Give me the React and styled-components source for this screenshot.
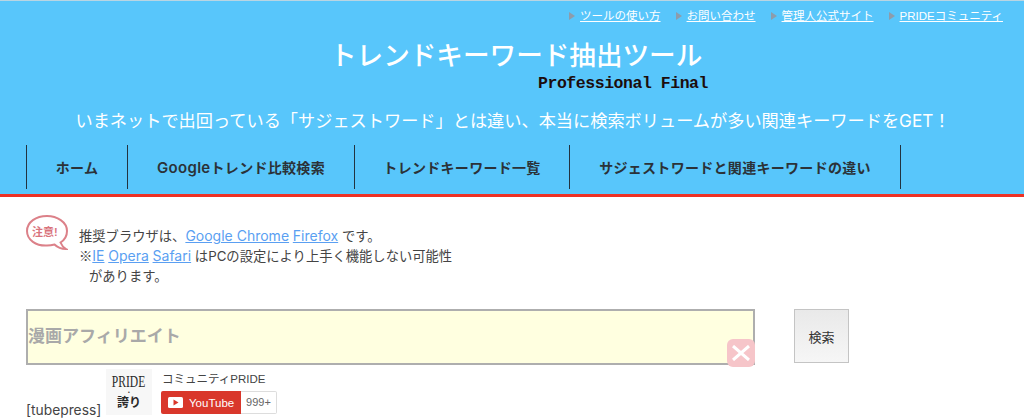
import React from 'react';
import styled, { createGlobalStyle } from 'styled-components';

const JP = `"Liberation Sans", "Noto Sans CJK JP", sans-serif`;
const WIDE = `Inter, "Noto Sans CJK JP", sans-serif`;

const Global = createGlobalStyle`
  html, body { margin: 0; padding: 0; background: #fff; overflow: hidden; }
  body { font-family: ${JP}; color: #333; }
`;

const Page = styled.div`
  width: 1024px;
  height: 419px;
  overflow: hidden;
`;

const Header = styled.header`
  height: 193px;
  background: #58c6fb;
  border-top: 1px solid #b9d5e3;
  border-bottom: 3px solid #ee3124;
  display: flex;
  flex-direction: column;
`;

const TopLinks = styled.nav`
  display: flex;
  justify-content: flex-end;
  gap: 15px;
  padding: 6px 21px 0 0;
  height: 18px;
  font-size: 11.5px;
  line-height: 18px;
`;

const TopLink = styled.a`
  color: #fff;
  text-decoration: underline;
  display: flex;
  align-items: center;
  gap: 5px;
  &::before {
    content: '';
    width: 0;
    height: 0;
    border-left: 6px solid #8d9cab;
    border-top: 4px solid transparent;
    border-bottom: 4px solid transparent;
  }
`;

const Logo = styled.div`
  display: flex;
  flex-direction: column;
  align-items: flex-end;
  width: 378px;
  margin: 15px 0 0 330px;
`;

const Title = styled.h1`
  margin: 0;
  width: 100%;
  font-size: 26.6px;
  line-height: 32px;
  font-weight: 500;
  color: #fff;
  white-space: nowrap;
`;

const Sub = styled.div`
  font-family: "Liberation Mono", monospace;
  font-weight: 700;
  font-size: 16.5px;
  letter-spacing: -0.46px;
  line-height: 18px;
  margin-top: 3px;
  color: #1c0c0c;
  white-space: nowrap;
`;

const Tagline = styled.p`
  margin: 15px 0 0;
  padding-left: 2px;
  text-align: center;
  font-family: ${WIDE};
  font-size: 17.2px;
  line-height: 26px;
  color: #fff;
  white-space: nowrap;
`;

const Nav = styled.nav`
  display: flex;
  margin: 11px 0 0 26px;
  height: 44px;
  width: max-content;
  border-right: 1px solid #22333f;
`;

const NavItem = styled.a`
  display: flex;
  align-items: center;
  justify-content: center;
  width: ${p => p.$w}px;
  box-sizing: border-box;
  border-left: 1px solid #22333f;
  font-family: ${WIDE};
  font-size: 14px;
  letter-spacing: 0.3px;
  font-weight: 600;
  color: #2b3238;
  white-space: pre;
`;

const NavLatin = styled.span`
  font-size: 15px;
`;

const Main = styled.main`
  padding: 18px 0 0 26px;
`;

const Notice = styled.div`
  display: flex;
  align-items: flex-start;
  gap: 11px;
`;

const Bubble = styled.svg`
  width: 42px;
  height: 37px;
  flex: none;
`;

const NoticeText = styled.div`
  margin-top: 11px;
  width: 390px;
  font-family: ${WIDE};
  font-size: 13.3px;
  line-height: 20px;
  color: #444;
  white-space: nowrap;
`;

const Mark = styled.span`
  font-family: "Noto Sans CJK JP", sans-serif;
`;

const Indent = styled.div`
  padding-left: 10px;
`;

const Link = styled.a`
  font-size: 14px;
  color: #5a9ff2;
  text-decoration: underline;
`;

const SearchRow = styled.form`
  display: flex;
  align-items: flex-start;
  margin-top: 23px;
  gap: 39px;
`;

const InputWrap = styled.div`
  position: relative;
  width: 729px;
  height: 56px;
`;

const Input = styled.div`
  box-sizing: border-box;
  width: 100%;
  height: 100%;
  background: #ffffe0;
  border: 2px solid #aeaeae;
  font-size: 17px;
  font-weight: 700;
  color: #a9a9a9;
  line-height: 52px;
`;

const Clear = styled.div`
  position: absolute;
  right: 0;
  bottom: -2px;
  width: 28px;
  height: 28px;
  border-radius: 6px;
  background: #f6c5c9;
  display: flex;
  align-items: center;
  justify-content: center;
`;

const SearchButton = styled.button`
  box-sizing: border-box;
  width: 55px;
  height: 54px;
  border: 1px solid #c4c4c4;
  background: linear-gradient(#e9e9e9, #f6f6f6);
  font-family: ${JP};
  font-size: 13px;
  color: #333;
  padding: 0;
`;

const Bottom = styled.div`
  display: flex;
  align-items: flex-start;
  margin-top: 4px;
`;

const Tube = styled.span`
  font-family: ${WIDE};
  font-size: 13.8px;
  line-height: 18px;
  margin-top: 32px;
  color: #444;
  width: 80px;
  white-space: nowrap;
`;

const Avatar = styled.div`
  width: 46px;
  height: 46px;
  background: #f7f7f7;
  display: flex;
  flex-direction: column;
  align-items: center;
  color: #2a2a2a;
`;

const AvatarTop = styled.span`
  font-family: "Liberation Serif", serif;
  font-size: 17px;
  line-height: 16px;
  margin-top: 5px;
  transform: scaleX(.68);
`;

const AvatarDot = styled.span`
  font-size: 5px;
  line-height: 4px;
`;

const AvatarBottom = styled.span`
  font-family: "Noto Sans CJK JP", serif;
  font-weight: 700;
  font-size: 12px;
  line-height: 16px;
`;

const Channel = styled.div`
  margin-left: 9px;
`;

const ChannelName = styled.div`
  font-size: 11.5px;
  line-height: 16px;
  margin-top: 2px;
  padding-left: 1px;
  color: #444;
`;

const Yt = styled.div`
  display: flex;
  margin-top: 4px;
  height: 23px;
`;

const YtButton = styled.div`
  display: flex;
  align-items: center;
  gap: 6px;
  width: 80px;
  box-sizing: border-box;
  padding-left: 7px;
  background: #d9372b;
  border-radius: 2px 0 0 2px;
  color: #fff;
  font-size: 11.5px;
  font-weight: 500;
`;

const YtCount = styled.div`
  box-sizing: border-box;
  width: 36px;
  border: 1px solid #ddd;
  border-left: 0;
  border-radius: 0 2px 2px 0;
  font-size: 11px;
  line-height: 21px;
  text-align: center;
  color: #666;
`;

export default function App() {
  return (
    <Page>
      <Global />
      <Header>
        <TopLinks>
          <TopLink>ツールの使い方</TopLink>
          <TopLink>お問い合わせ</TopLink>
          <TopLink>管理人公式サイト</TopLink>
          <TopLink>PRIDEコミュニティ</TopLink>
        </TopLinks>
        <Logo>
          <Title>トレンドキーワード抽出ツール</Title>
          <Sub>Professional Final</Sub>
        </Logo>
        <Tagline>いまネットで出回っている「サジェストワード」とは違い、本当に検索ボリュームが多い関連キーワードをGET！</Tagline>
        <Nav>
          <NavItem $w={101}>ホーム</NavItem>
          <NavItem $w={227}><NavLatin>Google</NavLatin>トレンド比較検索</NavItem>
          <NavItem $w={215}>トレンドキーワード一覧</NavItem>
          <NavItem $w={331}>サジェストワードと関連キーワードの違い</NavItem>
        </Nav>
      </Header>
      <Main>
        <Notice>
          <Bubble viewBox="0 0 42 37">
            <path d="M21 1C31 1 41 7 41 16c0 5-2.500 9-6.500 11.500 1 2.500 3 5 5.500 6.500-4.500 0-8.500-1.500-11.500-4.500-2.500.7-5 1-7.500 1C10 31 1 25 1 16S10 1 21 1z" fill="#fff" stroke="#dc8189" strokeWidth="2" />
            <text x="6" y="21" fontSize="11" fontWeight="700" fill="#d9737c" fontFamily={JP}>注意!</text>
          </Bubble>
          <NoticeText>
            <div>推奨ブラウザは、<Link>Google Chrome</Link> <Link>Firefox</Link> です。</div>
            <div><Mark>※</Mark><Link>IE</Link> <Link>Opera</Link> <Link>Safari</Link> はPCの設定により上手く機能しない可能性</div>
            <Indent>があります。</Indent>
          </NoticeText>
        </Notice>
        <SearchRow>
          <InputWrap>
            <Input>漫画アフィリエイト</Input>
            <Clear>
              <svg width="20" height="16" viewBox="0 0 20 16">
                <path d="M2 1l16 14M18 1L2 15" stroke="#fff" strokeWidth="3" />
              </svg>
            </Clear>
          </InputWrap>
          <SearchButton type="button">検索</SearchButton>
        </SearchRow>
        <Bottom>
          <Tube>[tubepress]</Tube>
          <Avatar>
            <AvatarTop>PRIDE</AvatarTop>
            <AvatarDot>•</AvatarDot>
            <AvatarBottom>誇り</AvatarBottom>
          </Avatar>
          <Channel>
            <ChannelName>コミュニティPRIDE</ChannelName>
            <Yt>
              <YtButton>
                <svg width="15" height="11" viewBox="0 0 15 11">
                  <rect width="15" height="11" rx="1.500" fill="#fff" />
                  <path d="M5.500 2.500v6l5-3z" fill="#d9372b" />
                </svg>
                YouTube
              </YtButton>
              <YtCount>999+</YtCount>
            </Yt>
          </Channel>
        </Bottom>
      </Main>
    </Page>
  );
}
